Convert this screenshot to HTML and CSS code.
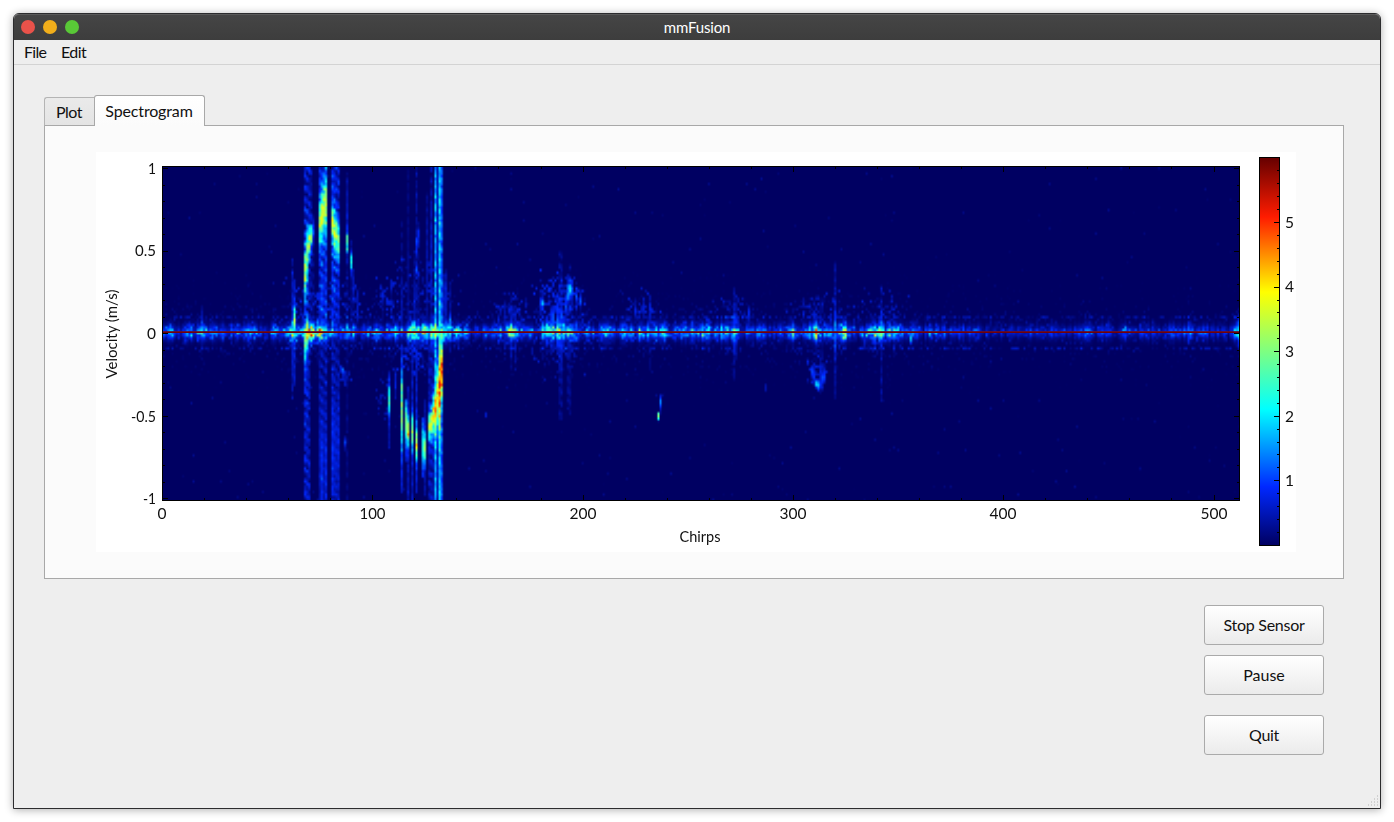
FILE: index.html
```html
<!DOCTYPE html>
<html lang="en">
<head>
<meta charset="utf-8">
<title>mmFusion</title>
<link rel="stylesheet" href="styles.css">
</head>
<body>
<main class="window">
  <header class="titlebar">
    <div class="lights"><i class="light close"></i><i class="light min"></i><i class="light max"></i></div>
    <span class="title">mmFusion</span>
  </header>
  <nav class="menubar"><span class="menu-file">File</span><span class="menu-edit">Edit</span></nav>
  <section class="content">
    <div class="tabs">
      <div class="tab">Plot</div>
      <div class="tab active">Spectrogram</div>
    </div>
    <div class="panel">
      <div class="chart">
        <canvas id="plot" width="1200" height="400"></canvas>
        <svg class="labels" id="labels" width="1200" height="400" viewBox="0 0 1200 400">
          <text x="604" y="390" textLength="41" lengthAdjust="spacingAndGlyphs" text-anchor="middle">Chirps</text>
          <text transform="translate(21 182) rotate(-90)" textLength="89" lengthAdjust="spacingAndGlyphs" text-anchor="middle">Velocity (m/s)</text>
        </svg>
      </div>
    </div>
    <div class="actions">
      <button class="btn stop">Stop Sensor</button>
      <button class="btn">Pause</button>
      <button class="btn quit">Quit</button>
    </div>
  </section>
  <svg class="grip" width="12" height="12" viewBox="0 0 12 12"><path d="M10 1h1M7 4h1M10 4h1M4 7h1M7 7h1M10 7h1M1 10h1M4 10h1M7 10h1M10 10h1" stroke="#b4b4b4" stroke-width="1"/></svg>
</main>
<script src="plot.js"></script>
</body>
</html>
```
FILE: styles.css
```css
* { box-sizing: border-box; }
body {
  margin: 0;
  padding: 13px;
  height: 822px;
  overflow: hidden;
  background: #fff;
  color: #111;
  font: 16px/20px Lato, "Open Sans", sans-serif;
}
.window {
  position: relative;
  width: 1368px;
  height: 796px;
  border: 1px solid #2c2c2e;
  border-radius: 6px 6px 0 0;
  background: #eee;
  box-shadow: 0 1px 9px rgba(0, 0, 0, .32);
}
.titlebar {
  height: 26px;
  display: grid;
  grid-template-columns: 100px 1fr 100px;
  align-items: center;
  background: linear-gradient(#454545, #3d3d3d);
  border-top: 1px solid #5a5a5a;
  border-radius: 5px 5px 0 0;
}
.lights { display: flex; gap: 8px; padding-left: 7px; margin-top: -1px; }
.light { width: 14px; height: 14px; border-radius: 50%; }
.close { background: #e9524a; }
.min { background: #f1ae1b; }
.max { background: #59c837; }
.title { color: #fff; font-size: 15px; text-align: center; letter-spacing: -.15px; margin-top: -1px; }
.menubar {
  height: 25px;
  display: flex;
  gap: 15px;
  padding: 2px 0 0 10px;
  border-bottom: 1px solid #d3d3d3;
}
.menu-file { width: 22px; letter-spacing: -.7px; }
.menu-edit { letter-spacing: -.6px; }
.content { padding: 30px 36px 0 30px; }
.tabs { display: flex; align-items: flex-end; height: 31px; position: relative; z-index: 1; }
.tab {
  height: 29px;
  width: 50px;
  border: 1px solid #b4b4b4;
  border-right: 0;
  border-bottom-color: #a8a8a8;
  border-radius: 3px 0 0 0;
  background: linear-gradient(#eaeaea, #e4e4e4);
  text-align: center;
  padding: 4px 1px 0 0;
  letter-spacing: -.5px;
}
.tab.active {
  height: 31px;
  width: 111px;
  padding-top: 5px;
  border: 1px solid #a8a8a8;
  border-bottom: 0;
  border-radius: 3px 3px 0 0;
  background: linear-gradient(#fff, #fbfbfb);
  letter-spacing: -.15px;
}
.panel {
  width: 1300px;
  height: 454px;
  margin-top: -1px;
  padding: 26px 0 0 51px;
  border: 1px solid #a8a8a8;
  background: #fbfbfb;
}
.chart { position: relative; width: 1200px; height: 400px; background: #fff; }
.chart canvas { display: block; }
.labels { position: absolute; left: 0; top: 0; font-size: 16px; fill: #111; }
.actions { display: flex; flex-direction: column; align-items: flex-end; gap: 10px; padding: 26px 20px 0 0; }
.btn {
  width: 120px;
  height: 40px;
  padding: 0 0 1px;
  border: 1px solid #aaa;
  border-radius: 3px;
  background: linear-gradient(#fff, #ebebeb);
  color: #111;
  font: inherit;
}
.btn.stop { letter-spacing: -.25px; }
.btn.quit { margin-top: 10px; letter-spacing: -.3px; }
.grip { position: absolute; right: 1px; bottom: 1px; }
```
FILE: plot.js
```js
const ctx = document.getElementById('plot').getContext('2d');
const OX = 96, OY = 152;

// Jet-like colour map
const stops = [[0,0,0,98],[.15,0,40,255],[.35,0,255,255],[.652,255,255,0],[.845,255,28,0],[1,100,0,0]];
function color(v) {
  v = Math.max(0, Math.min(1, v));
  let i = 1;
  while (v > stops[i][0]) i++;
  const a = stops[i - 1], b = stops[i], t = (v - a[0]) / (b[0] - a[0]);
  return [1, 2, 3].map(k => a[k] + (b[k] - a[k]) * t);
}

let seed = 7919;
function rnd() {
  seed = (seed + 0x6D2B79F5) | 0;
  let t = Math.imul(seed ^ seed >>> 15, 1 | seed);
  t = t + Math.imul(t ^ t >>> 7, 61 | t) ^ t;
  return ((t ^ t >>> 14) >>> 0) / 4294967296;
}
const bell = () => (rnd() + rnd() + rnd()) * 2 / 3 - 1;

const COLS = 512, ROWS = 128, CW = 1077 / COLS, CH = 334 / ROWS;
const data = new Float32Array(COLS * ROWS);

// Clutter around zero velocity: [x, strength]
const env = [[162,.17],[185,.18],[200,.3],[215,.18],[250,.19],[280,.22],[290,.38],[306,.5],[325,.42],[345,.36],[365,.22],[385,.24],[400,.34],[415,.38],[440,.5],[452,.36],[470,.19],[490,.2],[505,.36],[515,.36],[530,.25],[548,.36],[562,.48],[578,.44],[592,.22],[615,.18],[645,.3],[655,.24],[665,.27],[680,.17],[702,.3],[715,.22],[733,.42],[743,.18],[765,.2],[785,.15],[797,.32],[804,.2],[818,.5],[826,.22],[837,.43],[848,.25],[862,.25],[875,.4],[885,.38],[897,.24],[910,.22],[935,.17],[945,.12],[970,.14],[1000,.12],[1030,.14],[1050,.1],[1085,.14],[1110,.12],[1140,.15],[1155,.09],[1180,.15],[1191,.25],[1205,.12],[1225,.1],[1234,.14],[1240,.42]];
function envelope(x) {
  let i = 1;
  while (i < env.length - 1 && x > env[i][0]) i++;
  const a = env[i - 1], b = env[i];
  return a[1] + (b[1] - a[1]) * (x - a[0]) / (b[0] - a[0]);
}
let drift = .5;
for (let c = 0; c < COLS; c++) {
  const x = 163 + (c + .5) * CW, e = envelope(x);
  drift = drift * .4 + rnd() * .6;
  const k = e * (.05 + drift * 2.1);
  const reach = 3 + e * 6 + drift * 3.5;
  for (let r = 0; r < ROWS; r++) {
    const d = Math.abs(167 + (r + .5) * CH - 332);
    const n = rnd();
    let v = k * Math.exp(-Math.pow(d / reach, 1.7)) * (.45 + n * .7);
    if (rnd() < (.08 + e * .8) * Math.exp(-d / 35)) v += (.04 + e * .4) * Math.exp(-d / 17) * n;
    if (d > 14.5 && d < 17 && rnd() < .4) v += .1 * n;
    if (rnd() < .006) v += .045 * n;
    data[r * COLS + c] = v;
  }
}

// Streaks: x, top, bottom, edge value, peak value, peak y, peak spread, noise share
const streaks = [
  [291,258,395,.09,.13,330,55,.95],[293,285,400,.09,.14,330,35,.9],[295,278,385,.12,.6,320,14,.5],
  [304,167,500,.2,.7,274,26,.9],[306,167,500,.18,.64,255,28,.9],[308.3,167,500,.15,.76,242,16,.9],[310,167,330,.11,.6,236,14,1],[306,312,385,.12,.75,333,15,.3],[304,325,395,.13,.5,342,20,.3],
  [314,215,330,.05,.24,231,10,.8],
  [318.5,167,330,.2,.62,223,24,.75],[320.7,167,330,.26,.74,216,23,.7],[322.8,167,330,.2,.68,210,28,.75],[325,167,330,.24,.66,204,28,.7],
  [318.5,330,500,.1,.11,450,60,1],[320.7,330,500,.16,.18,470,50,.95],[325,330,500,.15,.17,470,50,.95],[322.8,330,500,.1,.11,450,60,1],
  [331,167,330,.24,.76,223,17,.75],[333,167,330,.22,.7,232,22,.8],[335.3,167,330,.18,.64,236,22,.85],[337.5,167,330,.18,.6,243,19,.85],
  [331,330,500,.17,.18,450,60,.95],[333,330,500,.13,.14,450,60,1],[335.3,330,500,.11,.12,450,60,1],[337.5,330,500,.13,.14,450,60,1],
  [346,172,500,.05,.55,242,14,.95],[346,172,230,.09,.12,215,20,.9],[350,240,335,.05,.45,262,10,.7],
  [354,270,335,.06,.11,285,20,1],[358,290,335,.06,.11,305,20,1],[343,367,382,.08,.22,370,6,.6],[341,366,372,.1,.16,369,4,.5],
  [345.5,437,452,.04,.2,443,4,.3],
  [388,370,450,.09,.46,400,16,.45],[395,368,400,.05,.12,382,15,.8],
  [400.5,345,492,.12,.56,412,36,.35],[400.5,383,392,.4,.52,388,5,.2],[405,398,462,.09,.56,422,21,.3],[407,385,500,.12,.72,432,15,.5],
  [411.5,330,500,.11,.58,432,18,.5],[417,340,492,.12,.66,443,18,.45],[422,418,478,.14,.46,446,19,.25],[424,400,495,.08,.62,448,16,.45],
  [428,345,500,.14,.68,427,14,.8],[430,167,330,.1,.12,250,60,1],[430,330,500,.14,.76,423,15,.8],[432,330,500,.1,.76,416,21,.7],[427,190,330,.06,.09,260,60,1],
  [434.3,167,500,.34,.76,411,24,.4],[436.7,167,500,.1,.74,397,30,.4],[438.7,167,500,.38,.84,388,40,.35],[440.8,167,500,.24,.92,372,27,.4],
  [443,275,330,.05,.11,298,25,.9],[445,268,330,.07,.13,298,25,.7],[449,282,350,.06,.3,323,9,.6],
  [417,167,325,.09,.2,243,10,1],[417,262,274,.08,.22,270,4,.3],[419,222,325,.05,.17,236,9,.9],[407,170,330,.05,.05,280,65,1],[401,220,330,.06,.09,310,30,1],[413,250,330,.06,.09,310,35,1],
  [391,278,330,.04,.14,285,7,.9],[383,288,330,.05,.16,296,6,.9],
  [505,300,350,.06,.1,330,25,1],[511,294,370,.06,.15,330,25,1],[515,305,370,.06,.15,330,25,1],
  [541,292,330,.05,.22,304,6,.8],[543,292,345,.05,.36,303,5,.7],[550,304,350,.08,.18,323,17,.9],
  [553,304,350,.08,.25,319,16,.9],[557,298,355,.06,.24,323,25,.9],[559,250,420,.07,.2,328,34,1],[561,250,420,.06,.22,328,38,1],
  [566,295,340,.06,.21,304,14,.9],[568,273,410,.08,.34,293,11,1],[570,264,415,.07,.44,289,9,.95],[572,280,335,.06,.24,290,12,.9],[576,286,340,.04,.22,295,10,.9],[580,290,330,.04,.26,300,6,.9],
  [634,297,320,.03,.15,310,8,.9],[643,298,320,.03,.14,307,8,.9],[649,294,370,.06,.15,310,15,1],
  [733,286,380,.08,.24,331,22,.9],[735,307,360,.05,.18,331,18,.9],[749,305,335,.04,.17,314,9,.8],
  [657.5,411,421,.1,.48,416,5,.1],[660,394,416,.05,.28,402,5,.4],
  [811,366,382,.06,.23,371,5,.6],[813,366,385,.05,.18,376,7,.6],[816,378,390,.09,.34,384,4,.4],[818,380,392,.08,.32,385,5,.4],[820,300,395,.07,.19,382,8,.9],[822,300,392,.05,.21,377,10,.9],[824,364,384,.05,.19,376,7,.7],
  [835,262,400,.1,.28,330,22,.75],[881,285,402,.09,.3,330,15,.9],[865,335,350,.04,.13,340,8,.6],
  [910,333,344,.15,.3,339,4,.3],[1239,312,350,.08,.4,332,10,.3],[1189,322,345,.08,.19,331,10,.5],
  [202,305,355,.04,.15,325,14,.8],[485,412,418,.08,.12,415,4,.2],[765,383,392,.04,.08,388,8,.5]
];
for (const [x, y0, y1, base, peak, py, spread, noise] of streaks) {
  const c = Math.max(0, Math.min(COLS - 1, Math.floor((x - 162.6) / CW)));
  for (let r = 0; r < ROWS; r++) {
    const y = 167 + (r + .5) * CH;
    if (y < y0 || y > y1) continue;
    const g = Math.exp(-Math.pow((y - py) / spread, 2));
    // Diagonal ripple gives the interleaved dashes of the wide bands
    const ripple = .5 + .5 * Math.sin(r * 1.45 - c * 1.4);
    const mod = 1 - noise * (1 - g * .65) * (.6 * ripple + .6 * rnd());
    const v = (base + (peak - base) * g) * Math.max(0, mod) * (.84 + rnd() * .3);
    const i = r * COLS + c;
    data[i] = Math.max(data[i], v);
  }
}
// Loose echoes: x, y, half width, half height, density, value
for (const [x, y, w, h, p, val] of [[420,290,50,45,.07,.1],[325,305,50,40,.12,.11],[385,300,16,25,.12,.1],[560,300,34,42,.15,.13],[510,315,28,32,.13,.1],[562,350,38,40,.07,.08],[640,312,30,28,.11,.1],[735,312,30,30,.08,.08],[820,312,48,30,.09,.09],[885,312,32,30,.08,.08],[345,375,8,14,.2,.09],[384,395,10,32,.12,.08],[415,350,26,40,.14,.12],[818,372,16,20,.18,.1]]) {
  for (let k = 0; k < w * h * 4 / (CW * CH) * p; k++) {
    const c = Math.floor((x + bell() * w - 163) / CW), r = Math.floor((y + bell() * h - 167) / CH);
    const i = r * COLS + c;
    data[i] = Math.max(data[i], val * (.25 + rnd()));
  }
}

const src = document.createElement('canvas');
src.width = COLS; src.height = ROWS;
const sctx = src.getContext('2d'), img = sctx.createImageData(COLS, ROWS);
data.forEach((v, i) => { img.data.set([...color(v), 255], i * 4); });
sctx.putImageData(img, 0, 0);

ctx.translate(-OX, -OY);
ctx.fillStyle = '#fff';
ctx.fillRect(OX, OY, 1200, 400);
ctx.drawImage(src, 163, 167, 1077, 334);
ctx.fillStyle = 'rgba(105,12,35,.85)';
ctx.fillRect(163, 331, 1077, 2);
ctx.fillStyle = '#700008';
ctx.fillRect(163, 332, 1077, 1);

ctx.fillStyle = '#000';
ctx.fillRect(162, 166, 1078, 1);
ctx.fillRect(162, 500, 1078, 1);
ctx.fillRect(162, 166, 1, 335);
ctx.fillRect(1239, 166, 1, 335);
for (let c = 0; c <= 500; c += 20) {
  const x = Math.round(162 + c * 2.103), l = c % 100 ? 2 : 5;
  ctx.fillRect(x, 167, 1, l);
  ctx.fillRect(x, 500 - l, 1, l);
}
for (let k = -10; k <= 10; k++) {
  const y = Math.round(333 - k * 16.5), l = k % 5 ? 2 : 5;
  ctx.fillRect(163, y, l, 1);
  ctx.fillRect(1239 - l, y, l, 1);
}

// Colour bar
const grad = ctx.createLinearGradient(0, 545, 0, 157);
stops.forEach(([t, r, g, b]) => grad.addColorStop(t, `rgb(${r},${g},${b})`));
ctx.fillStyle = grad;
ctx.fillRect(1259, 157, 21, 389);
ctx.strokeStyle = '#000';
ctx.strokeRect(1259.5, 157.5, 20, 388);
ctx.fillStyle = '#000';
for (let k = 1; k < 30; k++) {
  const y = Math.round(544.8 - k * 12.91), l = k % 5 ? 2 : 5;
  ctx.fillRect(1279 - l, y, l, 1);
}

const labels = document.getElementById('labels');
function label(s, x, y, anchor, len) {
  const t = document.createElementNS('http://www.w3.org/2000/svg', 'text');
  t.textContent = s;
  t.setAttribute('x', x - OX);
  t.setAttribute('y', y - OY);
  t.setAttribute('text-anchor', anchor);
  if (len) { t.setAttribute('textLength', len); t.setAttribute('lengthAdjust', 'spacingAndGlyphs'); }
  labels.appendChild(t);
}
[['0',162,9],['100',372.5,26],['200',583,27],['300',793,27],['400',1003,27],['500',1214,27]].forEach(([s, x, l]) => label(s, x, 519, 'middle', l));
[['1',156,174,8],['0.5',156,256,21],['0',156,339,9],['-0.5',156,422,25],['-1',156,504,13]].forEach(([s, x, y, l]) => label(s, x, y, 'end', l));
[['5',228],['4',292],['3',357],['2',422],['1',486]].forEach(([s, y]) => label(s, 1285, y, 'start', 9));
```
